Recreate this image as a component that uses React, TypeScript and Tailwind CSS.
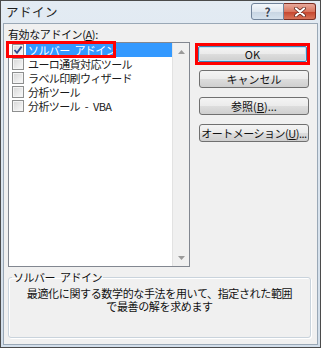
import React from "react";

const items = [
  "ソルバー アドイン",
  "ユーロ通貨対応ツール",
  "ラベル印刷ウィザード",
  "分析ツール",
  "分析ツール - VBA",
];

function CheckBox({ checked }: { checked?: boolean }) {
  return (
    <span className="w-[12px] h-[12px] shrink-0 border border-[#8e8f8f] bg-[linear-gradient(135deg,#d6d6d6,#fbfbfb)] shadow-[inset_0_0_0_1px_#f4f4f4] flex items-center justify-center">
      {checked && (
        <svg width="10" height="10" viewBox="0 0 10 10">
          <path d="M1.5 5 L4 7.8 L8.6 1.6" fill="none" stroke="#2f4a8c" strokeWidth="1.8" />
        </svg>
      )}
    </span>
  );
}

function Btn({ children }: { children: React.ReactNode }) {
  return (
    <div className="ml-[4px] w-[110px] h-[18px] rounded-[3px] border border-[#707070] bg-[linear-gradient(#f4f4f4_0%,#ebebeb_50%,#dddddd_51%,#cfcfcf_100%)] flex items-center justify-center text-[11px] leading-none text-[#111]">
      {children}
    </div>
  );
}

export default function App() {
  return (
    <div className="w-[321px] h-[348px] border border-[#4b4b4b] bg-[linear-gradient(#e3ebf3,#d2deea)] flex flex-col font-['Noto_Sans_CJK_JP','Liberation_Sans',sans-serif] text-[#111] overflow-hidden">
      {/* Title bar */}
      <div className="h-[22px] flex items-start shrink-0">
        <span className="pl-[5px] pt-[3px] text-[12.5px] leading-[16px] tracking-[0.5px] text-[#1e1e1e]">アドイン</span>
        <div className="ml-auto mr-[4px] mt-[2px] flex">
          <div className="w-[33px] h-[17px] rounded-l-[3px] border border-[#71839a] bg-[linear-gradient(#f3f7fb_0%,#dfe7f0_50%,#c7d4e2_51%,#d5e2ee_100%)] flex items-center justify-center text-[12px] font-bold leading-none text-[#3b4656] [text-shadow:0_0_2px_#fff]">
            ?
          </div>
          <div className="w-[32px] h-[17px] rounded-r-[3px] border border-l-0 border-[#7a2d22] bg-[linear-gradient(#e9a99c_0%,#d9765f_50%,#c4432c_51%,#d8745a_100%)] flex items-center justify-center">
            <svg width="14" height="10" viewBox="0 0 14 10">
              <path d="M3 1.5 L11 8.5 M11 1.5 L3 8.5" stroke="#5a2018" strokeWidth="3.6" strokeLinecap="round" />
              <path d="M3 1.5 L11 8.5 M11 1.5 L3 8.5" stroke="#ffffff" strokeWidth="2.2" strokeLinecap="round" />
            </svg>
          </div>
        </div>
      </div>

      {/* Client area */}
      <div className="flex-1 mx-[2px] mb-[2px] border border-[#9aa8b6] bg-[#f0f0f0] px-[4px] flex flex-col">
        <div className="flex items-start">
          {/* Left column */}
          <div className="w-[182px] flex flex-col">
            <div className="pt-[3px] h-[17px] text-[11px] leading-[14px] tracking-[-0.4px]">
              有効なアドイン(<span className="underline">A</span>):
            </div>
            <div className="relative mt-[1px] h-[225px] border border-[#828790] bg-white flex">
              <div className="flex-1 flex flex-col">
                {items.map((it, i) => (
                  <div key={i} className="h-[14px] flex items-center pl-[3px]">
                    <CheckBox checked={i === 0} />
                    <span
                      className={`ml-[2px] h-[14px] pl-[2px] pr-[2px] text-[11px] leading-[14px] tracking-[-0.6px] [word-spacing:3px] whitespace-pre ${
                        i === 0 ? "flex-1 bg-[#3399ff] text-white" : "text-[#1a1a1a]"
                      }`}
                    >
                      {it}
                    </span>
                  </div>
                ))}
              </div>
              <div className="w-[17px] bg-[#f0f0f0] border-l border-[#e2e2e2] flex flex-col justify-between">
                <div className="h-[17px] flex items-center justify-center">
                  <svg width="7" height="4" viewBox="0 0 7 4">
                    <path d="M0 4 L3.5 0 L7 4 Z" fill="#9a9a9a" />
                  </svg>
                </div>
                <div className="h-[17px] flex items-center justify-center">
                  <svg width="7" height="4" viewBox="0 0 7 4">
                    <path d="M0 0 L3.5 4 L7 0 Z" fill="#9a9a9a" />
                  </svg>
                </div>
              </div>
              {/* highlight frame */}
              <div className="absolute left-[-3px] top-[-2px] w-[110px] h-[17px] border-[3px] border-[#ff0000]" />
            </div>
          </div>

          {/* Right column */}
          <div className="ml-[5px] pt-[19px] flex flex-col">
            <div className="w-[115px] h-[22px] border-[3px] border-[#ff0000] flex">
              <div className="flex-1 rounded-[2px] border border-[#3c7fb1] bg-[linear-gradient(#f4f4f4_0%,#ebebeb_50%,#dddddd_51%,#cfcfcf_100%)] shadow-[inset_0_0_0_1px_#bfe3f7] flex items-center justify-center text-[11px] leading-none">
                OK
              </div>
            </div>
            <div className="mt-[5px]">
              <Btn>キャンセル</Btn>
            </div>
            <div className="mt-[9px]">
              <Btn>
                参照(<span className="underline">B</span>)...
              </Btn>
            </div>
            <div className="mt-[9px]">
              <Btn>
                <span className="tracking-[-0.5px]">
                  オートメーション(<span className="underline">U</span>)...
                </span>
              </Btn>
            </div>
          </div>
        </div>

        {/* Group box */}
        <fieldset className="mt-[3px] w-[303px] rounded-[3px] border border-[#c9d3dc] shadow-[1px_1px_0_#ffffff,inset_1px_1px_0_#ffffff] pb-[24px]">
          <legend className="ml-[3px] px-[1px] text-[11px] leading-[14px] tracking-[-0.5px] [word-spacing:3px]">ソルバー アドイン</legend>
          <div className="pt-[3px] text-center text-[11px] leading-[13px] tracking-[-0.35px]">
            最適化に関する数学的な手法を用いて、指定された範囲
            <br />
            で最善の解を求めます
          </div>
        </fieldset>
      </div>
    </div>
  );
}
